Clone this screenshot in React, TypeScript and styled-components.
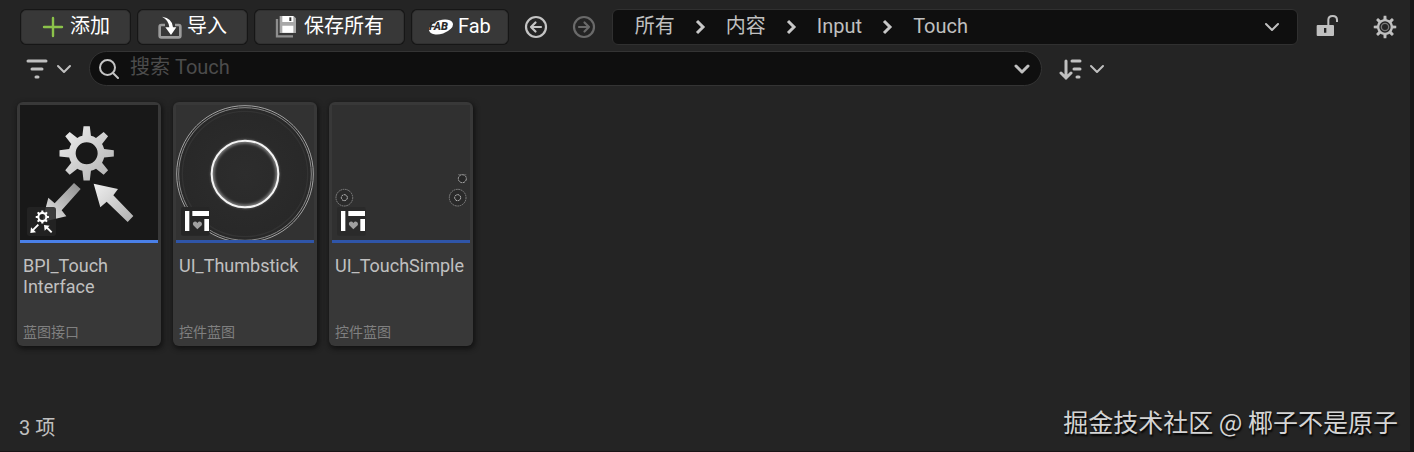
import React from 'react';
import styled, { createGlobalStyle } from 'styled-components';

const Global = createGlobalStyle`
  *, *::before, *::after { box-sizing: border-box; }
  body {
    margin: 0;
    background: #242424;
    color: #c0c0c0;
    font: 20px/24px Roboto, "Noto Sans CJK SC", sans-serif;
  }
  button, input { font: inherit; color: inherit; }
`;

const Browser = styled.main`
  min-height: 100vh;
  display: flex;
  flex-direction: column;
  border-right: 4px solid #171717;
  border-bottom: 1px solid #1a1517;
`;

const Toolbar = styled.div`
  display: flex;
  align-items: center;
  gap: 8px;
  padding: 9px 13px 0 21px;
`;

const ActionButton = styled.button<{ $compact?: boolean }>`
  display: flex;
  align-items: center;
  gap: 5px;
  height: 34px;
  padding: 0 ${p => (p.$compact ? 16 : 19)}px 2px;
  border: 1px solid #303030;
  border-radius: 5px;
  background: #383838;
  box-shadow: 0 0 0 1px #161616;
  color: #fff;
  white-space: nowrap;
  svg { margin-top: 2px; }
`;

const IconButton = styled.button<{ $width: number }>`
  display: flex;
  align-items: center;
  justify-content: space-between;
  flex: none;
  width: ${p => p.$width}px;
  height: 32px;
  padding: 0;
  border: 0;
  background: none;
`;

const History = styled.div`
  display: flex;
  gap: 24px;
  margin: 0 8px;
`;

const PathBar = styled.nav`
  flex: 1;
  display: flex;
  align-items: center;
  gap: 20px;
  height: 36px;
  padding: 0 17px 2px 22px;
  border: 1px solid #303030;
  border-radius: 6px;
  background: #0f0f0f;
  svg { margin-top: 2px; }
`;

const Crumb = styled.a`
  color: inherit;
  text-decoration: none;
  white-space: nowrap;
`;

const Spacer = styled.div`
  flex: 1;
`;

const Tools = styled.div`
  display: flex;
  gap: 33px;
  margin-left: 10px;
`;

const FilterBar = styled.div`
  display: flex;
  align-items: center;
  gap: 17px;
  padding: 6px 305px 0 25px;
`;

const SearchBox = styled.label`
  flex: 1;
  display: flex;
  align-items: center;
  gap: 11px;
  height: 35px;
  padding: 0 11px 0 8px;
  border: 1px solid #343434;
  border-radius: 18px;
  background: #0f0f0f;
`;

const SearchInput = styled.input`
  flex: 1;
  min-width: 0;
  height: 28px;
  padding: 0 0 4px;
  border: 0;
  outline: 0;
  background: none;
  &::placeholder { color: #4c4c4c; opacity: 1; }
`;

const Assets = styled.ul`
  display: flex;
  flex-wrap: wrap;
  gap: 12px;
  margin: 0;
  padding: 16px 17px;
  list-style: none;
`;

const Card = styled.li`
  display: flex;
  flex-direction: column;
  width: 144px;
  height: 244px;
  padding: 3px;
  border-radius: 6px;
  background: #383838;
  box-shadow: 1px 2px 5px 1px #121212;
`;

const Thumb = styled.div<{ $accent: string; $back: string }>`
  height: 138px;
  background: ${p => p.$back};
  border-bottom: 3px solid ${p => p.$accent};
  svg { display: block; }
`;

const AssetName = styled.div`
  padding: 12px 3px 0;
  font-size: 18px;
  line-height: 21px;
`;

const AssetType = styled.div`
  margin-top: auto;
  padding: 0 3px 3px;
  color: #808080;
  font-size: 14px;
  line-height: 16px;
`;

const Footer = styled.footer`
  display: flex;
  align-items: flex-end;
  justify-content: space-between;
  margin-top: auto;
  padding: 0 12px 11px 19px;
`;

const Watermark = styled.span`
  color: #d4d4d4;
  font: 25px/38px "Noto Sans CJK SC", sans-serif;
  text-shadow: 1px 2px 2px #000;
`;

type IconProps = { w: number; h: number; box: string; children: React.ReactNode };

const Icon = ({ w, h, box, children }: IconProps) => (
  <svg width={w} height={h} viewBox={box} fill="none" aria-hidden="true">
    {children}
  </svg>
);

// Outline of an eight-toothed cog, with the hole as a second subpath.
const cog = (cx: number, cy: number, outer: number, root: number, hole: number, tip = 0.115, base = 0.24) => {
  const at = (r: number, a: number) => `${(cx + r * Math.sin(a)).toFixed(2)} ${(cy - r * Math.cos(a)).toFixed(2)}`;
  let d = `M${at(root, -base)}`;
  for (let i = 0; i < 8; i++) {
    const a = (i * Math.PI) / 4;
    d += `L${at(outer, a - tip)}L${at(outer, a + tip)}L${at(root, a + base)}`;
    d += `A${root} ${root} 0 0 1 ${at(root, a + Math.PI / 4 - base)}`;
  }
  return `${d}Z M${cx - hole} ${cy}a${hole} ${hole} 0 1 0 ${hole * 2} 0a${hole} ${hole} 0 1 0 ${-hole * 2} 0Z`;
};

const Chevron = ({ bold = false }: { bold?: boolean }) => (
  <Icon w={16} h={16} box="0 0 16 16">
    <path d="M2 5l6 6 6-6" stroke="#c0c0c0" strokeWidth={bold ? 3 : 2} strokeLinecap="round" strokeLinejoin="round" />
  </Icon>
);

const Separator = () => (
  <Icon w={11} h={16} box="0 0 11 16">
    <path d="M2 2l6 6-6 6" stroke="#c8c8c8" strokeWidth="3" />
  </Icon>
);

const PlusIcon = () => (
  <Icon w={24} h={24} box="0 0 24 24">
    <path d="M12 3v18M3 12h18" stroke="#8bc24a" strokeWidth="2.4" strokeLinecap="round" />
  </Icon>
);

const ImportIcon = () => (
  <Icon w={24} h={24} box="474 46 72 72">
    <path d="M495 76h-11q-5 0-5 5v27q0 5 5 5h52q5 0 5-5V81q0-5-5-5h-11" stroke="#9c9c9c" strokeWidth="8" />
    <path d="M486 51q32 5 33 32h10l-16 23-17-23h12q-2-22-22-32z" fill="#fff" />
  </Icon>
);

const SaveIcon = () => (
  <Icon w={24} h={24} box="76 45 72 72">
    <path d="M82 57v52h48" stroke="#8e8e8e" strokeWidth="7" />
    <path d="M90 48h42l7 7v44H90z" fill="#a8a8a8" />
    <path d="M98 48h33v18H98zM98 77h33v21H98z" fill="#fff" />
    <path d="M119 52h6v11h-6z" fill="#333" />
  </Icon>
);

const FabIcon = () => (
  <Icon w={24} h={24} box="0 0 24 24">
    <ellipse cx="12" cy="12" rx="12.4" ry="6.8" fill="#fff" transform="rotate(-18 12 12)" />
    <text x="0" y="15" fill="#2c2c2c" fontFamily="Roboto, sans-serif" fontSize="11" fontWeight="900" fontStyle="italic">FAB</text>
  </Icon>
);

const RoundArrow = ({ forward = false }: { forward?: boolean }) => (
  <Icon w={24} h={24} box="0 0 24 24">
    <g stroke={forward ? '#6a6a6a' : '#c4c4c4'} strokeWidth="2.2">
      <circle cx="12" cy="12" r="10" />
      <path
        d={forward ? 'M7 12h10M12.5 7.5L17 12l-4.5 4.5' : 'M17 12H7M11.500 7.5L7 12l4.5 4.5'}
        strokeLinecap="round"
        strokeLinejoin="round"
      />
    </g>
  </Icon>
);

const LockIcon = () => (
  <Icon w={24} h={24} box="948 45 72 72">
    <path d="M985 76V60q0-12 13-12t13 12v6" stroke="#c0c0c0" strokeWidth="6" />
    <path fillRule="evenodd" d="M953 75h46q3 0 3 3v27q0 3-3 3h-46q-3 0-3-3V78q0-3 3-3zM972 84v14h7V84z" fill="#c0c0c0" />
  </Icon>
);

const GearIcon = () => (
  <Icon w={24} h={24} box="0 0 72 72">
    <path d={cog(36, 36, 34, 24, 17, 0.12, 0.2)} fill="#c0c0c0" fillRule="evenodd" />
    <circle cx="36" cy="36" r="11" stroke="#777" strokeWidth="4" />
  </Icon>
);

const FilterIcon = () => (
  <Icon w={24} h={24} box="0 0 24 24">
    <path d="M3 4h18M7 12h10M11 20h2" stroke="#c0c0c0" strokeWidth="3" strokeLinecap="round" />
  </Icon>
);

const SearchIcon = () => (
  <Icon w={21} h={20} box="-1 0 21 20">
    <path d="M14 14l5 5" stroke="#c4c4c4" strokeWidth="2" strokeLinecap="round" />
    <circle cx="8.5" cy="8.5" r="7.5" stroke="#c4c4c4" strokeWidth="2" />
  </Icon>
);

const SortIcon = () => (
  <Icon w={24} h={24} box="0 0 24 24">
    <path d="M7 4v17M2 16l5 5 5-5" stroke="#c0c0c0" strokeWidth="3" strokeLinecap="round" />
    <path d="M13 4h8M15 12h6M18 20h2" stroke="#c0c0c0" strokeWidth="3" strokeLinecap="round" />
  </Icon>
);

const WidgetBadge = ({ back }: { back: string }) => (
  <g transform="translate(15 306)">
    <rect width="86" height="86" rx="6" fill={back} />
    <path d="M12 12h13v60H12zM34 12h50v15H34zM70 36h14v36H70z" fill="#fff" />
    <path d="M49 67L37 55q-4-8 3-11 6-1 9 4 4-5 9-4 7 3 4 11z" fill="#a0a0a0" />
  </g>
);

const InterfaceArt = () => (
  <Icon w={138} h={135} box="60 45 414 405">
    <defs>
      <linearGradient id="metal" x1="0" y1="0" x2="1" y2="1">
        <stop offset="0" stopColor="#f0f0f0" />
        <stop offset="1" stopColor="#b0b0b0" />
      </linearGradient>
      <linearGradient id="shaft" x1="1" y1="0" x2="0" y2="1">
        <stop offset="0" stopColor="#8c8c8c" />
        <stop offset="1" stopColor="#ececec" />
      </linearGradient>
    </defs>
    <path d={cog(260, 190, 82, 54, 33)} fill="url(#metal)" fillRule="evenodd" />
    <path d="M222 279l20 18-57 64 14 18-73 17 19-73 19 17z" fill="url(#shaft)" />
    <path d="M281 281l73 16-14 19 60 62-17 18-63-61-19 17z" fill="url(#metal)" />
    <rect x="81" y="351" width="87" height="87" rx="8" fill="#242424" fillOpacity="0.86" />
    <path d={cog(127, 381, 20, 15, 9, 0.15, 0.22)} fill="#fff" fillRule="evenodd" />
    <path d="M113 402l4 4-15 15 6 6-17 2 2-17 5 5zM132 405l17 2-5 5 13 13-4 4-13-13-6 6z" fill="#fff" />
  </Icon>
);

const ThumbstickArt = () => (
  <Icon w={138} h={135} box="33 45 414 405">
    <defs>
      <filter id="glow" x="-20%" y="-20%" width="140%" height="140%">
        <feGaussianBlur stdDeviation="4" />
      </filter>
      <radialGradient id="well">
        <stop offset="0" stopColor="#2d2d2d" />
        <stop offset="1" stopColor="#282828" />
      </radialGradient>
    </defs>
    <circle cx="240" cy="252" r="205" fill="url(#well)" stroke="#a4a4a4" strokeWidth="3" />
    <circle cx="240" cy="252" r="199" stroke="#8a8a8a" strokeWidth="3" />
    <circle cx="240" cy="252" r="188" stroke="#333" strokeWidth="4" />
    <circle cx="240" cy="252" r="97" stroke="#999" strokeWidth="8" filter="url(#glow)" />
    <circle cx="240" cy="252" r="100" stroke="#f4f4f4" strokeWidth="6" />
    <g transform="translate(33 45)">
      <WidgetBadge back="#262626" />
    </g>
  </Icon>
);

const TouchArt = () => (
  <Icon w={138} h={135} box="36 45 414 405">
    {[73, 413].map(x => (
      <g key={x}>
        <circle cx={x} cy="323" r="25" fill="#2a2a2a" stroke="#858585" strokeWidth="3" strokeDasharray="5 2" />
        <circle cx={x} cy="323" r="9" stroke="#c8c8c8" strokeWidth="3" strokeDasharray="6 2" />
      </g>
    ))}
    <circle cx="427" cy="266" r="12" fill="#262626" stroke="#b0b0b0" strokeWidth="3" strokeDasharray="7 2" />
    <path d="M414 254h25" stroke="#777" strokeWidth="2" />
    <g transform="translate(36 45)">
      <WidgetBadge back="#2a2a2a" />
    </g>
  </Icon>
);

const assets = [
  { name: <>BPI_Touch<br />Interface</>, type: '蓝图接口', accent: '#4a80e8', back: '#181818', art: <InterfaceArt /> },
  { name: 'UI_Thumbstick', type: '控件蓝图', accent: '#2f55a8', back: '#323232', art: <ThumbstickArt /> },
  { name: 'UI_TouchSimple', type: '控件蓝图', accent: '#2f55a8', back: '#303030', art: <TouchArt /> },
];

const crumbs = ['所有', '内容', 'Input', 'Touch'];

export default function App() {
  return (
    <Browser>
      <Global />
      <Toolbar>
        <ActionButton><PlusIcon />添加</ActionButton>
        <ActionButton><ImportIcon />导入</ActionButton>
        <ActionButton><SaveIcon />保存所有</ActionButton>
        <ActionButton $compact><FabIcon />Fab</ActionButton>
        <History>
          <IconButton $width={24} aria-label="后退"><RoundArrow /></IconButton>
          <IconButton $width={24} aria-label="前进"><RoundArrow forward /></IconButton>
        </History>
        <PathBar aria-label="路径">
          {crumbs.map((c, i) => (
            <React.Fragment key={c}>
              {i > 0 && <Separator />}
              <Crumb href="#">{c}</Crumb>
            </React.Fragment>
          ))}
          <Spacer />
          <IconButton $width={16} aria-label="路径列表"><Chevron /></IconButton>
        </PathBar>
        <Tools>
          <IconButton $width={24} aria-label="锁定"><LockIcon /></IconButton>
          <IconButton $width={24} aria-label="设置"><GearIcon /></IconButton>
        </Tools>
      </Toolbar>
      <FilterBar>
        <IconButton $width={47} aria-label="筛选"><FilterIcon /><Chevron /></IconButton>
        <SearchBox>
          <SearchIcon />
          <SearchInput type="text" placeholder="搜索 Touch" aria-label="搜索" />
          <Chevron bold />
        </SearchBox>
        <IconButton $width={46} aria-label="排序"><SortIcon /><Chevron /></IconButton>
      </FilterBar>
      <Assets>
        {assets.map((a, i) => (
          <Card key={i}>
            <Thumb $accent={a.accent} $back={a.back}>{a.art}</Thumb>
            <AssetName>{a.name}</AssetName>
            <AssetType>{a.type}</AssetType>
          </Card>
        ))}
      </Assets>
      <Footer>
        <span>3 项</span>
        <Watermark>掘金技术社区 @ 椰子不是原子</Watermark>
      </Footer>
    </Browser>
  );
}
